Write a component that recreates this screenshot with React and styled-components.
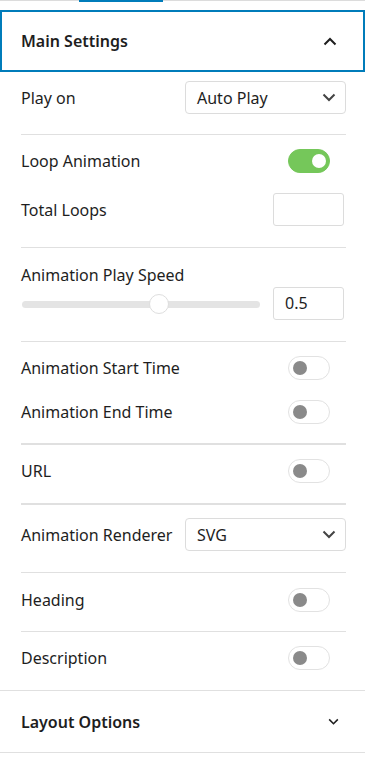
import React from "react";
import styled, { createGlobalStyle } from "styled-components";

const GlobalStyle = createGlobalStyle`
  body {
    margin: 0;
    background: #fff;
    font-family: "Noto Sans", "Open Sans", sans-serif;
    color: #1e1e1e;
  }
`;

const Sidebar = styled.div`
  width: 365px;
  background: #fff;
`;

const TabStrip = styled.div`
  height: 2px;
  border-top: 1px solid #dcdcdc;
  margin-bottom: 7px;
`;

const TabIndicator = styled.div`
  width: 84px;
  height: 2px;
  margin: -1px 0 0 79px;
  background: #007cba;
`;

const PanelHeader = styled.div`
  display: flex;
  align-items: center;
  justify-content: space-between;
  height: ${({ $open }) => ($open ? "58px" : "61px")};
  padding: 0 26px 0 ${({ $open }) => ($open ? "19px" : "21px")};
  border: ${({ $open }) => ($open ? "2px solid #007cba" : "none")};
  border-bottom: ${({ $open }) => ($open ? "2px solid #007cba" : "1px solid #e0e0e0")};
  font-size: 16px;
  font-weight: 600;
`;

const PanelBody = styled.div`
  padding: 0 19px 0 21px;
  border-bottom: 1px solid #e0e0e0;
`;

const Section = styled.div`
  display: flex;
  flex-direction: column;
  gap: ${({ $gap }) => $gap || 0}px;
  padding: ${({ $top }) => $top}px 0 ${({ $bottom }) => $bottom}px;
  border-bottom: ${({ $line }) => ($line === undefined ? 1 : $line)}px solid #e0e0e0;
`;

const Row = styled.div`
  display: flex;
  align-items: center;
  justify-content: space-between;
  height: 33px;
  font-size: 16px;
`;

const Label = styled.div`
  font-size: 16px;
  line-height: 22px;
`;

const SelectBox = styled.div`
  display: flex;
  align-items: center;
  justify-content: space-between;
  box-sizing: border-box;
  width: 161px;
  height: 33px;
  padding: 0 9px 0 11px;
  border: 1px solid #dcdcdc;
  border-radius: 4px;
  font-size: 16px;
`;

const TextBox = styled.div`
  box-sizing: border-box;
  width: 71px;
  height: 33px;
  margin-right: 2px;
  padding: 0 11px;
  border: 1px solid #dcdcdc;
  border-radius: 3px;
  font-size: 16px;
  line-height: 31px;
`;

const Toggle = styled.div`
  position: relative;
  box-sizing: border-box;
  width: 42px;
  height: 24px;
  margin-right: 16px;
  border-radius: 12px;
  border: 1px solid ${({ $on }) => ($on ? "#75c75a" : "#e2e2e2")};
  background: ${({ $on }) => ($on ? "#75c75a" : "#fff")};

  &::after {
    content: "";
    position: absolute;
    top: 4px;
    left: ${({ $on }) => ($on ? "23px" : "4px")};
    width: 14px;
    height: 14px;
    border-radius: 50%;
    background: ${({ $on }) => ($on ? "#fff" : "#8a8a8a")};
  }
`;

const SliderRow = styled.div`
  display: flex;
  align-items: center;
  justify-content: space-between;
  height: 33px;
`;

const Track = styled.div`
  position: relative;
  width: 238px;
  height: 7px;
  margin: 1px 0 0 1px;
  border-radius: 4px;
  background: #e4e4e4;
`;

const Thumb = styled.div`
  position: absolute;
  top: -7px;
  width: 20px;
  height: 20px;
  margin-left: -10px;
  box-sizing: border-box;
  border-radius: 50%;
  border: 1px solid #dedede;
  background: #fff;
`;

const Chevron = ({ up, size = 14, color = "#1e1e1e", width = 2 }) => (
  <svg width={size} height={size / 2 + 2} viewBox="0 0 14 9" fill="none">
    <path
      d={up ? "M1.5 7.5 L7 2 L12.5 7.5" : "M1.5 1.5 L7 7 L12.5 1.5"}
      stroke={color}
      strokeWidth={width}
    />
  </svg>
);

const Select = ({ value }) => (
  <SelectBox>
    {value}
    <Chevron color="#444" />
  </SelectBox>
);

const ToggleRow = ({ label, on }) => (
  <Row>
    {label}
    <Toggle $on={on} />
  </Row>
);

export default function App() {
  const speed = 0.575;
  return (
    <Sidebar>
      <GlobalStyle />
      <TabStrip>
        <TabIndicator />
      </TabStrip>
      <PanelHeader $open>
        Main Settings
        <Chevron up />
      </PanelHeader>
      <PanelBody>
        <Section $top={9} $bottom={20}>
          <Row>
            Play on
            <Select value="Auto Play" />
          </Row>
        </Section>
        <Section $top={9} $bottom={21} $gap={16}>
          <ToggleRow label="Loop Animation" on />
          <Row>
            Total Loops
            <TextBox />
          </Row>
        </Section>
        <Section $top={16} $bottom={21} $gap={1}>
          <Label>Animation Play Speed</Label>
          <SliderRow>
            <Track>
              <Thumb style={{ left: `${speed * 100}%` }} />
            </Track>
            <TextBox>0.5</TextBox>
          </SliderRow>
        </Section>
        <Section $top={9} $bottom={15} $gap={11} $line={2}>
          <ToggleRow label="Animation Start Time" />
          <ToggleRow label="Animation End Time" />
        </Section>
        <Section $top={9} $bottom={16} $line={2}>
          <ToggleRow label="URL" />
        </Section>
        <Section $top={13} $bottom={21}>
          <Row>
            Animation Renderer
            <Select value="SVG" />
          </Row>
        </Section>
        <Section $top={10} $bottom={15}>
          <ToggleRow label="Heading" />
        </Section>
        <Section $top={9} $bottom={16} $line={0}>
          <ToggleRow label="Description" />
        </Section>
      </PanelBody>
      <PanelHeader>
        Layout Options
        <Chevron size={11} />
      </PanelHeader>
    </Sidebar>
  );
}
